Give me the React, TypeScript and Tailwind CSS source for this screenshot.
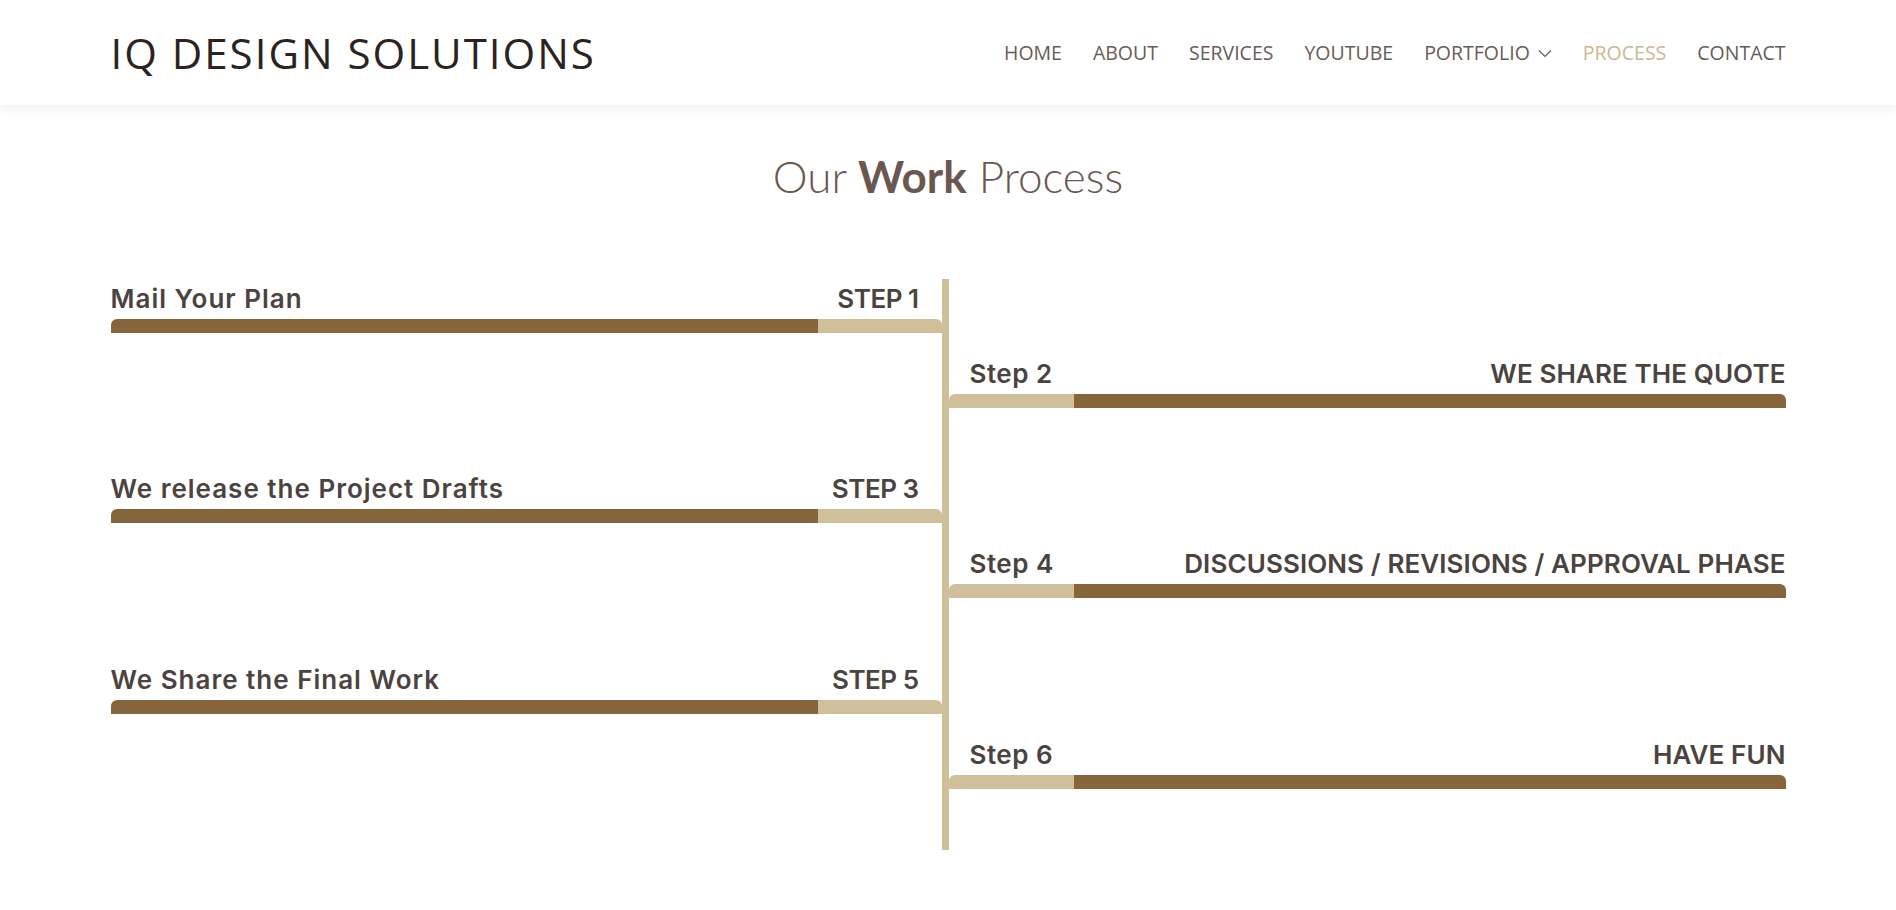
import React from "react";

type Step = { side: "left" | "right"; title: string; label: string; h: string };

const steps: Step[] = [
  { side: "left", title: "Mail Your Plan", label: "STEP 1", h: "h-[54px]" },
  { side: "right", title: "WE SHARE THE QUOTE", label: "Step 2", h: "h-[75px]" },
  { side: "left", title: "We release the Project Drafts", label: "STEP 3", h: "h-[115px]" },
  { side: "right", title: "DISCUSSIONS / REVISIONS / APPROVAL PHASE", label: "Step 4", h: "h-[75px]" },
  { side: "left", title: "We Share the Final Work", label: "STEP 5", h: "h-[116px]" },
  { side: "right", title: "HAVE FUN", label: "Step 6", h: "h-[75px]" },
];

const textCls =
  "text-[26px] leading-[30px] font-semibold text-[#4b4340] [font-family:Inter,'Noto_Sans',sans-serif]";

function LeftItem({ s }: { s: Step }) {
  return (
    <div className="w-full">
      <div className="flex justify-between pr-[23px] mb-[5px]">
        <span className={textCls + " tracking-[1px]"}>{s.title}</span>
        <span className={textCls + " tracking-[-0.5px]"}>{s.label}</span>
      </div>
      <div className="flex h-[14px] rounded-t-[6px] overflow-hidden">
        <div className="flex-1 bg-[#87653a]" />
        <div className="w-[124px] bg-[#cfbf9a]" />
      </div>
    </div>
  );
}

function RightItem({ s }: { s: Step }) {
  return (
    <div className="w-full">
      <div className="flex justify-between pl-[21px] mb-[5px]">
        <span className={textCls + " tracking-[0.5px]"}>{s.label}</span>
        <span className={textCls + " tracking-[0.1px]"}>{s.title}</span>
      </div>
      <div className="flex h-[14px] rounded-t-[6px] overflow-hidden">
        <div className="w-[125px] bg-[#cfbf9a]" />
        <div className="flex-1 bg-[#87653a]" />
      </div>
    </div>
  );
}

const navItems = ["HOME", "ABOUT", "SERVICES", "YOUTUBE", "PORTFOLIO", "PROCESS", "CONTACT"];

export default function App() {
  return (
    <div className="min-h-[910px] bg-white">
      <header className="h-[105px] bg-white shadow-[0_3px_14px_rgba(0,0,0,0.07)] relative z-10">
        <div className="mx-auto w-[1675px] h-full flex items-center justify-between">
          <div className="text-[42px] tracking-[2px] text-[#2a2321] [font-family:'Open_Sans',sans-serif] font-normal leading-none mt-[1px]">
            IQ DESIGN SOLUTIONS
          </div>
          <nav className="flex items-center gap-[31px] [font-family:'Open_Sans',sans-serif] text-[19.5px] mt-[1px]">
            {navItems.map((n) => (
              <span
                key={n}
                className={
                  "flex items-center " +
                  (n === "PROCESS" ? "text-[#cbb88f]" : "text-[#6b5a55]")
                }
              >
                {n}
                {n === "PORTFOLIO" && (
                  <svg className="ml-[8px] mt-[1px]" width="14" height="9" viewBox="0 0 14 9" fill="none">
                    <path d="M1 1.5 L7 7.5 L13 1.5" stroke="#6b5a55" strokeWidth="1.2" />
                  </svg>
                )}
              </span>
            ))}
          </nav>
        </div>
      </header>

      <main>
        <h1 className="mt-[46px] text-center text-[44px] leading-[50px] text-[#6b5750] [font-family:Lato,sans-serif] font-light">
          Our <span className="font-bold">Work</span> Process
        </h1>

        <div className="mx-auto w-[1675px] mt-[78px] pb-[60px]">
          <div className="flex flex-col">
            {steps.map((s, i) => (
              <div key={i} className={"flex " + s.h}>
                <div className="w-[838px] border-r-[7px] border-[#cfbf9a] box-border flex items-end">
                  {s.side === "left" && <LeftItem s={s} />}
                </div>
                <div className="flex-1 flex items-end">
                  {s.side === "right" && <RightItem s={s} />}
                </div>
              </div>
            ))}
            <div className="flex h-[61px]">
              <div className="w-[838px] border-r-[7px] border-[#cfbf9a]" />
            </div>
          </div>
        </div>
      </main>
    </div>
  );
}
